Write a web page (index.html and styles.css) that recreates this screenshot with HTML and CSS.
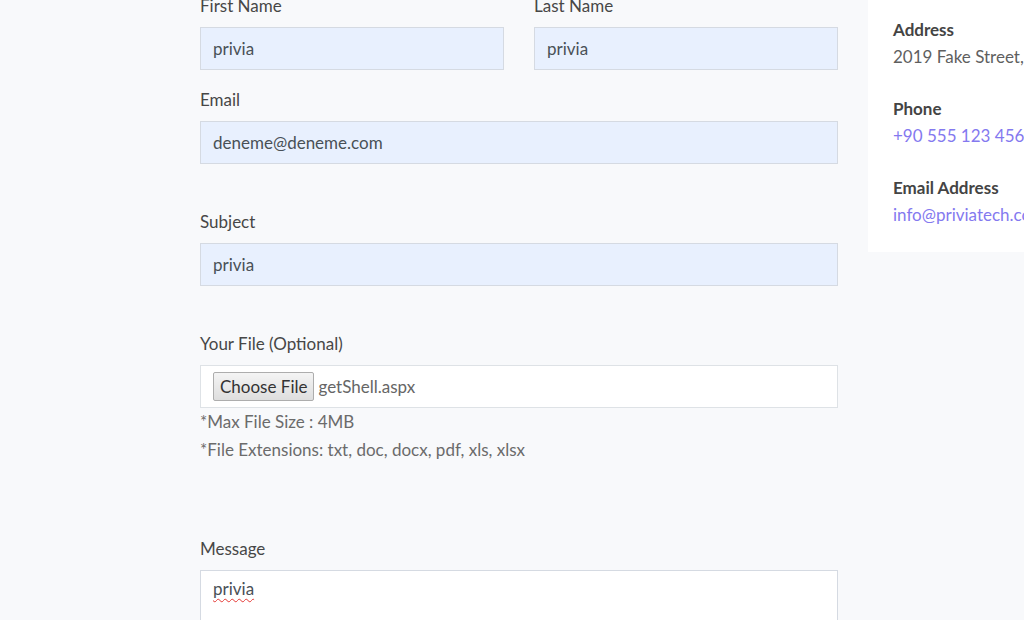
FILE: index.html
```html
<!DOCTYPE html>
<html lang="en">
<head>
<meta charset="utf-8">
<title>Contact</title>
<link rel="stylesheet" href="styles.css">
</head>
<body>
<div class="page">
  <form class="form">
    <div class="row">
      <div class="group">
        <label class="label">First Name</label>
        <div class="input filled">privia</div>
      </div>
      <div class="group">
        <label class="label">Last Name</label>
        <div class="input filled">privia</div>
      </div>
    </div>
    <div class="group spaced">
      <label class="label">Email</label>
      <div class="input filled">deneme@deneme.com</div>
    </div>
    <div class="group spaced">
      <label class="label">Subject</label>
      <div class="input filled">privia</div>
    </div>
    <div class="group file-group">
      <label class="label">Your File (Optional)</label>
      <div class="input file">
        <span class="file-btn">Choose File</span>
        <span class="file-name">getShell.aspx</span>
      </div>
      <p class="help">*Max File Size : 4MB</p>
      <p class="help">*File Extensions: txt, doc, docx, pdf, xls, xlsx</p>
    </div>
    <div class="group">
      <label class="label">Message</label>
      <div class="input textarea"><span class="misspelled">privia</span></div>
    </div>
  </form>
  <aside class="card">
    <div class="info">
      <h4 class="info-title">Address</h4>
      <p class="info-text">2019 Fake Street, Ceyhan</p>
    </div>
    <div class="info">
      <h4 class="info-title">Phone</h4>
      <p class="info-text link">+90 555 123 4567</p>
    </div>
    <div class="info">
      <h4 class="info-title">Email Address</h4>
      <p class="info-text link">info@priviatech.com</p>
    </div>
  </aside>
</div>
</body>
</html>
```

FILE: styles.css
```css
html, body {
  margin: 0;
  padding: 0;
  height: 100%;
  overflow: hidden;
  background: #f8f9fb;
  font-family: "Lato", "Liberation Sans", sans-serif;
  font-size: 17px;
  color: #4a4a4a;
}

.page {
  display: flex;
  gap: 30px;
  padding-left: 200px;
  width: 1200px;
}

.form {
  width: 638px;
  flex: none;
  margin-top: -7px;
}

.row {
  display: flex;
  gap: 30px;
}

.row .group {
  flex: 1;
  margin-bottom: 17px;
}

.group {
  margin-bottom: 18px;
}

.group.spaced {
  margin-bottom: 45px;
}

.file-group {
  margin-bottom: 72px;
}

.label {
  display: block;
  line-height: 24px;
  padding-top: 1px;
  margin-bottom: 9px;
  color: #474747;
}

.input {
  box-sizing: border-box;
  height: 43px;
  border: 1px solid #d5dae2;
  padding: 0 12px;
  display: flex;
  align-items: center;
  color: #495057;
  background: #fff;
}

.input.filled {
  background: #e8f0fe;
}

.input.file {
  height: 43px;
  margin-top: 1px;
  border-color: #dee2e6;
  gap: 4px;
}

.file-btn {
  box-sizing: border-box;
  height: 29px;
  padding: 0 6px;
  display: flex;
  align-items: center;
  border: 1px solid #adadad;
  border-radius: 2px;
  background: linear-gradient(#f4f4f4, #dedede);
  color: #333;
}

.file-name {
  color: #666;
}

.help {
  margin: 0;
  line-height: 28px;
  color: #6b6b6b;
}

.input.textarea {
  height: 80px;
  align-items: flex-start;
  padding-top: 6px;
  line-height: 24px;
}

.misspelled {
  text-decoration: underline wavy #e53935;
  text-decoration-thickness: 1px;
  text-underline-offset: 3px;
}

.card {
  flex: none;
  width: 300px;
  height: 252px;
  box-sizing: border-box;
  background: #fff;
  padding: 16px 25px;
}

.info {
  margin-bottom: 25px;
}

.info-title {
  margin: 0;
  font-size: 17px;
  font-weight: 700;
  line-height: 27px;
  color: #444;
}

.info-text {
  margin: 0;
  line-height: 27px;
  color: #5f5f5f;
  white-space: nowrap;
}

.info-text.link {
  color: #8479ef;
}
```
